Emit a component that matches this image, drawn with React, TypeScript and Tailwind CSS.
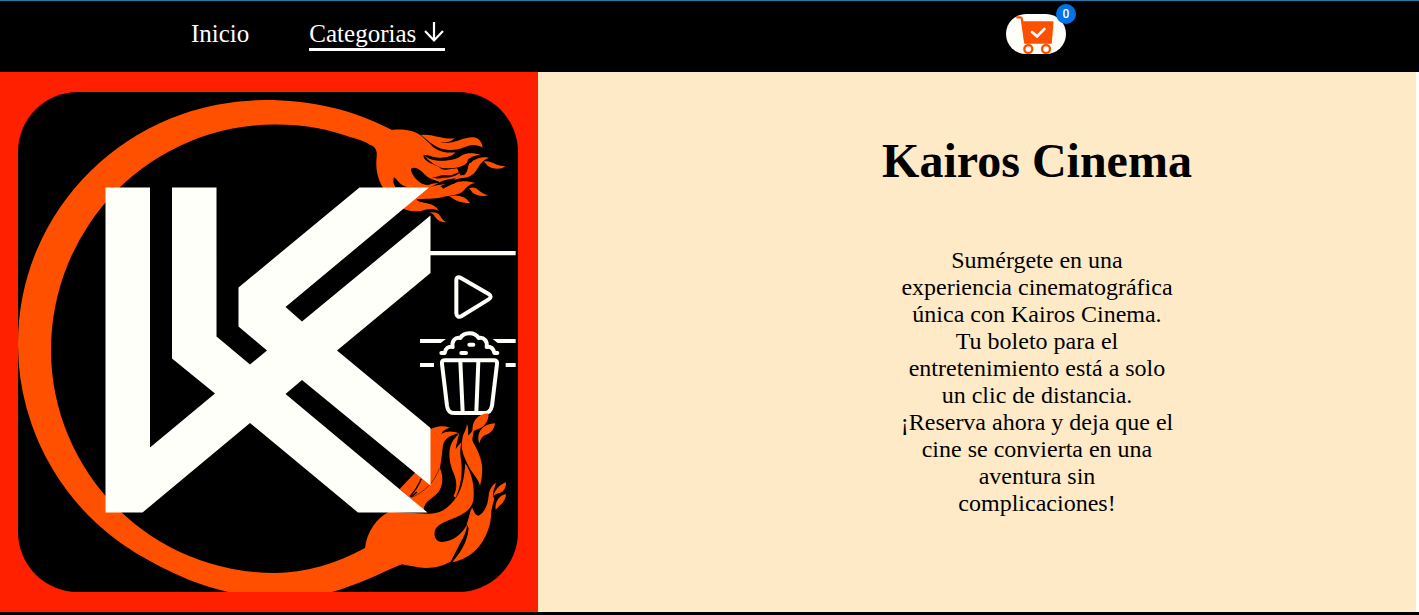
import React from "react";

function Logo() {
  return (
    <svg viewBox="18 92 500 500" className="block h-[500px] w-[500px] rounded-[60px] bg-black" role="img" aria-label="Kairos Cinema">
      <path
        fill="#ff5000"
        d="M392 130C352 109 310 100 265 100A247 243 0 0 0 18 343A247 245 0 0 0 150 561C177 576 202 586 228 592C260 597 305 599 332 592C357 585 379 574 402 564L402 530L365 548C335 564 305 573 275 573A224 223 0 0 1 51 350A224 225.500 0 0 1 275 124.500C304 124.500 328 129 350 137C360 140 367 142 370 145L398 150Z"
      />
      <g transform="translate(405 125) scale(.33333)" fill="#ff5000">
        <path d="M-40 15C0 11 27 17 50 33L76 58C91 76 116 86 151 82C144 93 124 99 102 98C81 96 68 88 56 90C54 98 60 104 66 108C78 119 101 120 110 133C119 136 142 132 156 130L166 150L155 160C131 163 116 165 102 173L70 190H-65C-83 160 -89 130 -85 95C-82 76 -92 64 -105 58Z" />
        <path d="M48 30C82 25 108 44 149 40C140 51 119 54 104 53C146 60 173 35 207 37C222 40 232 52 233 68C216 57 199 58 180 66C157 76 125 80 98 67C82 59 68 46 48 30Z" />
        <path d="M58 91C76 110 117 111 150 102C161 99 169 89 183 86C199 83 213 85 228 89C209 92 200 94 193 102C187 111 184 118 173 122C154 130 130 132 108 128C90 120 71 110 58 91Z" />
        <path d="M165 151C182 151 187 140 190 122C197 104 218 94 252 98C234 105 226 116 218 130C207 149 194 160 165 160L145 165Z" />
        <path d="M237 110C259 104 270 125 301 123C287 137 259 131 248 122Z" />
        <path d="M68 190C91 178 119 177 145 177C163 166 186 168 211 174C191 177 181 190 174 199C159 212 136 211 114 216C87 223 62 221 36 222L30 232L-3 249L0 222Z" />
        <path d="M192 189C220 180 221 207 250 210C235 217 213 211 203 203Z" />
        <path d="M133 213C162 207 184 216 195 234C170 235 151 227 133 213Z" />
        <path d="M-5 251L32 220C38 239 85 227 101 257C84 249 68 252 47 258C26 261 10 257 -5 251Z" />
        <path d="M73 262C110 258 103 281 124 292C108 292 97 286 90 275C86 267 80 265 73 262Z" />
        <g fill="#000">
          <path d="M18 131C34 122 48 137 62 151C75 164 91 165 104 171C103 176 87 174 79 177C65 184 48 178 34 163C24 151 17 139 18 131Z" />
          <path d="M-33 157C-22 163 -20 180 8 187H-28C-35 180 -37 167 -33 157Z" />
          <path d="M80 157C92 159 108 147 128 151C149 151 156 139 170 141C153 151 147 157 124 158C107 158 94 164 80 157Z" opacity=".85" />
          <path d="M166 149C172 138 174 130 168 127C178 125 185 118 189 119C184 130 188 143 176 151Z" />
          <path d="M188 105C195 94 216 95 228 97C212 103 205 105 197 114C190 112 186 110 188 105Z" />
          <path d="M106 184C124 175 140 170 154 168C139 183 123 184 116 191C111 190 112 186 106 184Z" />
        </g>
      </g>
      <g transform="translate(350 400) scale(.33333)" fill="#ff5000">
        <path d="M45 445C50 395 80 354 117 335L232 341C270 344 298 323 319 292C339 263 343 226 346 190C366 221 375 261 370 301C366 323 350 336 328 347C298 361 264 369 255 390C250 410 258 425 275 426C309 424 333 405 351 374C351 390 342 410 330 430C322 448 311 466 303 484C278 500 240 508 205 502L155 493L40 530Z" />
        <path d="M307 487C329 460 352 430 356 385L350 372C359 350 359 334 366 324C371 326 372 346 386 347C406 336 414 310 416 287C418 269 427 254 438 248C435 263 426 276 430 291C438 295 423 314 423 350C420 389 399 432 370 457C350 473 326 484 307 487Z" />
        <path d="M430 289C434 271 449 253 468 247C469 262 461 275 450 279C442 279 436 283 430 289Z" />
        <path d="M437 329C433 307 448 285 468 282C468 301 454 313 437 329Z" />
        <path d="M235 92C253 79 277 75 300 83C286 86 277 94 274 102C292 91 312 94 326 100C298 106 279 119 278 143C275 171 272 190 270 205C280 228 280 257 266 275C249 297 223 300 221 330L149 267L195 218Z" />
        <path d="M317 293L310 288C322 270 321 245 312 222C297 191 294 151 304 132C309 117 321 109 328 98C324 115 319 130 317 148C322 140 328 133 334 127C327 160 334 176 335 204C336 234 329 267 317 293Z" />
        <path d="M390 257C385 235 365 221 350 187C338 162 332 142 337 118C338 101 349 91 351 72C357 87 353 96 355 107C360 101 366 96 369 88C374 105 362 115 370 128C386 156 401 189 396 222C395 239 392 249 390 257Z" />
        <path d="M388 130C378 100 395 72 435 70C433 91 419 102 405 105C394 112 391 120 388 130Z" />
        <g fill="none" stroke="#000">
          <path d="M214 236C205 257 195 273 180 289M201 276L183 291" strokeWidth="4" />
          <path d="M268 205C254 247 220 278 185 292" strokeWidth="1.5" />
        </g>
      </g>
      <path
        fill="#fffffa"
        d="M105.500 187.500H150V447.500L215 393.500L172 358.500V187.500H216.500V336.500L250 364.500L267 350.500L238.500 326.500V287.500L359.500 187.500H429L285.500 307L302 321.500L430.500 215.500V273L337 350.500L430.500 428V485.500L302 380L285.500 394L427.500 512.500H358L250 423L142.500 512.500H105.500Z"
      />
      <g transform="translate(410 235) scale(.33333)" fill="#fffffa">
        <path d="M60 48H317V61H60ZM30 312H108L92 324H30ZM248 312H317V324H263ZM30 384H72V396H30ZM287 384H317V396H287Z" />
        <g fill="none" stroke="#fffffa" strokeWidth="12" strokeLinejoin="round" strokeLinecap="round">
          <path d="M139 136C139 126 146 125 153 129L236 177C244 182 244 188 236 193L155 243C146 248 139 244 139 235Z" />
          <path d="M94 354H104C106 341 114 333 128 336C125 319 134 306 151 309C161 291 194 289 206 309C222 306 233 318 230 336C243 333 251 342 253 354H262" />
          <path d="M154 354H168M178 329H190" />
          <path d="M103 376H253C260 376 262 380 261 387L246 512C243 526 236 534 225 534H132C120 534 113 526 111 512L96 387C95 380 97 376 103 376ZM151 380L158 530M205 380L199 530" />
        </g>
      </g>
      <path transform="translate(350 400) scale(.33333)" fill="#ff5000" d="M368 95C364 66 382 42 415 40C418 60 405 81 385 87C378 89 372 92 368 95Z" />
    </svg>
  );
}

function CartIcon() {
  return (
    <svg viewBox="48 42 180 120" className="block h-10 w-[60px]" fill="none" stroke="#ff5000">
      <path d="M79 52H91C94 52 95 54 96 59L106 130" strokeWidth="7" />
      <path d="M97 66H188L183 129H106Z" fill="#ff5000" strokeWidth="5" strokeLinejoin="round" />
      <circle cx="115" cy="147" r="12" fill="#fffffa" strokeWidth="7" />
      <circle cx="168" cy="147" r="12" fill="#fffffa" strokeWidth="7" />
      <path d="M126 96L141 109L163 87" stroke="#fff" strokeWidth="8" strokeLinecap="round" />
    </svg>
  );
}

function Header() {
  return (
    <header className="flex h-[72px] justify-between border-t border-[#247ba8] bg-black pr-[353px] pl-[191px] text-[25px] leading-[28px] text-white">
      <nav className="flex items-start gap-[60px] pt-[19px]">
        <a href="#">Inicio</a>
        <a href="#" className="flex h-[31px] w-[136px] border-b-[3px] border-white">
          <span>Categorias</span>
          <svg viewBox="0 0 20 21" className="mt-[2px] ml-2 h-[21px] w-5" fill="none" stroke="currentColor" strokeWidth="2.2">
            <path d="M10 0V19M1 9L10 18.500L19 9" />
          </svg>
        </a>
      </nav>
      <button className="relative mt-[13px] h-10 w-[60px] rounded-[20px] bg-[#fffffa]">
        <CartIcon />
        <span className="absolute -top-[10px] -right-[10px] flex h-5 w-5 items-center justify-center rounded-full bg-[#0073e6] font-[Roboto,sans-serif] text-[12px] leading-none font-medium text-white">
          0
        </span>
      </button>
    </header>
  );
}

export default function App() {
  return (
    <div className="h-[615px] overflow-hidden bg-black font-['Liberation_Serif',serif]">
      <Header />
      <main className="flex h-[540px] bg-white pr-[3px]">
        <section className="w-[538px] shrink-0 bg-[#ff2000] pt-5 pl-[18px]">
          <Logo />
        </section>
        <section className="flex grow flex-col items-center bg-[#ffeac8] pl-[120px] text-center text-black">
          <h1 className="mt-[61px] text-[48px] leading-[55px] font-bold">Kairos Cinema</h1>
          <p className="mt-[59px] w-[276px] text-[24px] leading-[27px]">
            Sumérgete en una experiencia cinematográfica única con Kairos Cinema. Tu boleto para el entretenimiento está a solo un clic de
            distancia. ¡Reserva ahora y deja que el cine se convierta en una aventura sin complicaciones!
          </p>
        </section>
      </main>
    </div>
  );
}
